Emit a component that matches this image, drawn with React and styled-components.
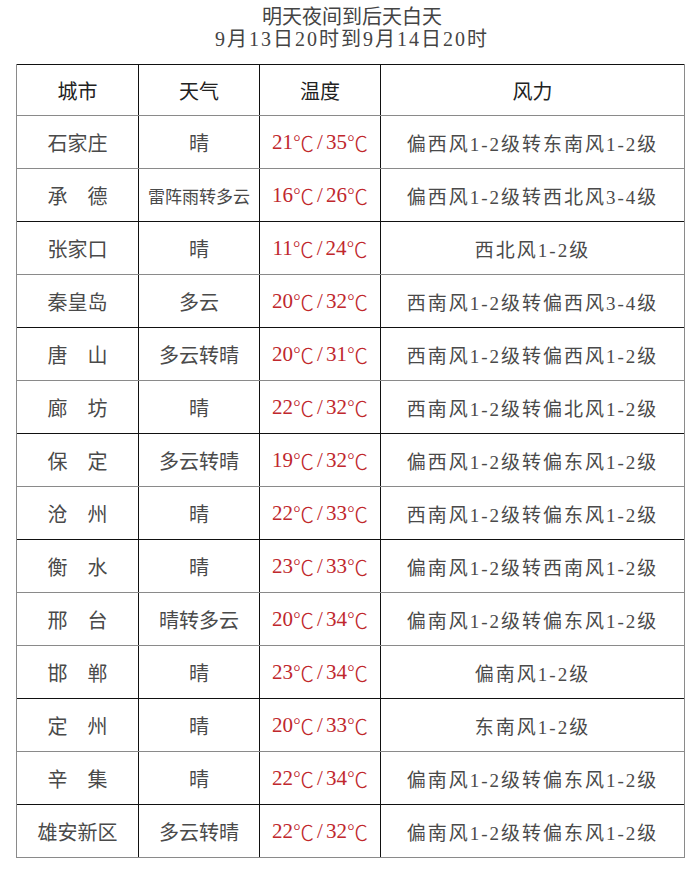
import React from "react";
import styled, { createGlobalStyle } from "styled-components";

const GlobalStyle = createGlobalStyle`
  html, body {
    margin: 0;
    padding: 0;
    background: #ffffff;
  }
  body {
    font-family: "Liberation Serif", "Noto Sans CJK SC", serif;
    color: #4a4a4a;
  }
`;

const Page = styled.div`
  width: 690px;
  padding-top: 6px;
`;

const Heading = styled.div`
  text-align: center;
  font-size: 20px;
  line-height: 22px;
  color: #444;
  padding-left: 14px;
  margin-bottom: 14px;
`;

const HeadLine = styled.div`
  letter-spacing: ${(p) => p.$ls || 0}px;
`;

const Table = styled.div`
  margin-left: 16px;
  width: 667px;
  border-left: 1px solid #8a8a8a;
  border-right: 1px solid #8a8a8a;
  border-bottom: 1px solid #8a8a8a;
`;

const Row = styled.div`
  display: grid;
  grid-template-columns: 121px 121px 121px 1fr;
  height: ${(p) => p.$h}px;
  border-top: 1px solid ${(p) => (p.$dark ? "#111" : "#8a8a8a")};
  box-sizing: border-box;
`;

const Cell = styled.div`
  display: flex;
  align-items: center;
  justify-content: center;
  border-left: ${(p) => (p.$first ? "none" : "1px solid #111")};
  font-size: ${(p) => p.$size || 20}px;
  color: ${(p) => p.$color || "#4a4a4a"};
  white-space: nowrap;
  letter-spacing: ${(p) => p.$ls || 0}px;
`;

const HeadCell = styled(Cell)`
  color: #222;
  font-size: 20px;
`;

const Deg = styled.span`
  font-family: "Noto Sans CJK SC", sans-serif;
  font-weight: 300;
`;

const Slash = styled.span`
  margin: 0 3px;
`;

const rows = [
  ["石家庄", "晴", "21/35", "偏西风1-2级转东南风1-2级"],
  ["承\u3000德", "雷阵雨转多云", "16/26", "偏西风1-2级转西北风3-4级"],
  ["张家口", "晴", "11/24", "西北风1-2级"],
  ["秦皇岛", "多云", "20/32", "西南风1-2级转偏西风3-4级"],
  ["唐\u3000山", "多云转晴", "20/31", "西南风1-2级转偏西风1-2级"],
  ["廊\u3000坊", "晴", "22/32", "西南风1-2级转偏北风1-2级"],
  ["保\u3000定", "多云转晴", "19/32", "偏西风1-2级转偏东风1-2级"],
  ["沧\u3000州", "晴", "22/33", "西南风1-2级转偏东风1-2级"],
  ["衡\u3000水", "晴", "23/33", "偏南风1-2级转西南风1-2级"],
  ["邢\u3000台", "晴转多云", "20/34", "偏南风1-2级转偏东风1-2级"],
  ["邯\u3000郸", "晴", "23/34", "偏南风1-2级"],
  ["定\u3000州", "晴", "20/33", "东南风1-2级"],
  ["辛\u3000集", "晴", "22/34", "偏南风1-2级转偏东风1-2级"],
  ["雄安新区", "多云转晴", "22/32", "偏南风1-2级转偏东风1-2级"],
];

// rows whose top line shows up dark in the picture
const darkTops = [2, 4, 6, 8, 11, 13];

function Temp({ value }) {
  const [lo, hi] = value.split("/");
  return (
    <>
      {lo}
      <Deg>℃</Deg>
      <Slash>/</Slash>
      {hi}
      <Deg>℃</Deg>
    </>
  );
}

export default function App() {
  return (
    <Page>
      <GlobalStyle />
      <Heading>
        <HeadLine>明天夜间到后天白天</HeadLine>
        <HeadLine $ls={2}>9月13日20时到9月14日20时</HeadLine>
      </Heading>
      <Table>
        <Row $h={51} $dark>
          <HeadCell $first>城市</HeadCell>
          <HeadCell>天气</HeadCell>
          <HeadCell>温度</HeadCell>
          <HeadCell>风力</HeadCell>
        </Row>
        {rows.map((r, i) => (
          <Row key={i} $h={53} $dark={darkTops.includes(i)}>
            <Cell $first>{r[0]}</Cell>
            <Cell $size={r[1].length > 4 ? 17 : 20}>{r[1]}</Cell>
            <Cell $color="#c0272d" $size={21}>
              <Temp value={r[2]} />
            </Cell>
            <Cell $size={19} $ls={2}>{r[3]}</Cell>
          </Row>
        ))}
      </Table>
    </Page>
  );
}
